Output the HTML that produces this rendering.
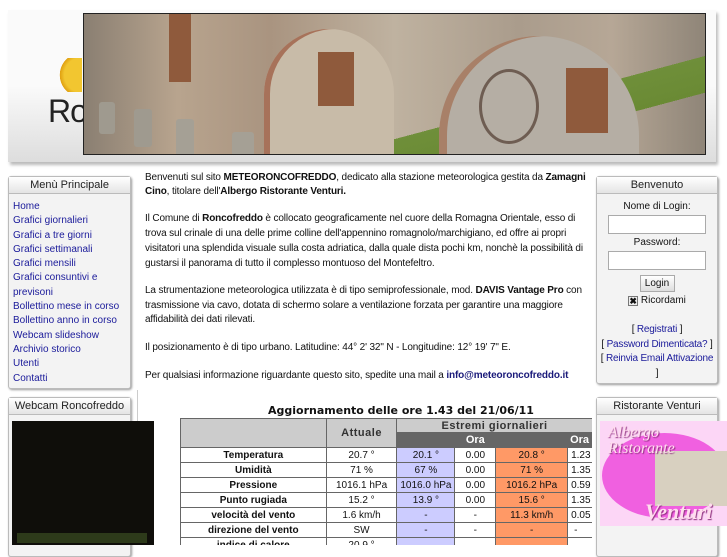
<!DOCTYPE html>
<html><head><meta charset="utf-8"><style>
*{margin:0;padding:0;box-sizing:border-box}
body{width:727px;height:545px;overflow:hidden;background:#fff;font-family:"Liberation Sans",sans-serif;font-size:10px;color:#111;position:relative}
.abs{position:absolute}
.hdr{left:8px;top:10px;width:708px;height:152px;background:linear-gradient(#fafafa 0%,#fafafa 50%,#ddd 100%);box-shadow:2px 3px 3px #bbb}
.photo{left:83px;top:13px;width:623px;height:142px;border:1px solid #222;overflow:hidden;
background:linear-gradient(165deg,rgba(0,0,0,0) 68%,#6f8f3a 68%,#6a8a34 80%,rgba(0,0,0,0) 80%),linear-gradient(90deg,#8a7f72,#b8a48e 15%,#a99480 30%,#bfb2a0 50%,#aa9c8c 70%,#b6a796 85%,#8f8578)}
.box{border:1px solid #bbb;border-radius:3px;background:#f3f3f3;box-shadow:1px 1px 2px #999}
.bh{height:17px;border-bottom:1px solid #bbb;background:linear-gradient(#fff,#e4e4e4);text-align:center;font-size:11px;line-height:16px;color:#222}
.menu a{display:block;color:#1a1a9a;text-decoration:none;font-size:10px;line-height:14.3px}
.c{white-space:nowrap;line-height:14.5px;letter-spacing:-0.14px}
table{border-collapse:collapse;font-size:10px}
td{border:1px solid #666;text-align:center;height:15px;padding:0}
.lb{font-weight:bold}
.mn{background:#ccccff}.mx{background:#ff9966}
.g{background:#ccc;font-weight:bold;font-size:11px;color:#333;letter-spacing:.5px}
.d{background:#666;color:#fff;font-weight:bold;font-size:11px}
input{display:block}
</style></head><body>
<div class="abs hdr"></div>
<div class="abs" style="left:58px;top:58px;width:24px;height:34px;background:radial-gradient(circle at 100% 50%,#f2c630 60%,#e0a010 75%,transparent 76%)"></div>
<div class="abs" style="left:48px;top:93px;font-size:32px;color:#222;letter-spacing:-1px">Ron</div>
<div class="abs photo">
 <div class="abs" style="left:85px;top:0;width:22px;height:68px;background:#8f5a3c"></div>
 <div class="abs" style="left:180px;top:15px;width:130px;height:140px;border-radius:65px 65px 0 0;background:#c8bba8;box-shadow:inset 6px 0 0 #a7725a"></div>
 <div class="abs" style="left:234px;top:38px;width:36px;height:54px;background:#8f5a3c"></div>
 <div class="abs" style="left:355px;top:22px;width:200px;height:140px;border-radius:100px 100px 0 0;background:#b5aea4;box-shadow:inset 8px 0 0 #a88068"></div>
 <div class="abs" style="left:395px;top:55px;width:60px;height:75px;border-radius:50%;border:3px solid #6e5d52"></div>
 <div class="abs" style="left:482px;top:54px;width:42px;height:65px;background:#8f5a3c"></div>
 <div class="abs" style="left:15px;top:88px;width:16px;height:32px;background:#9f9a8f;border-radius:3px"></div>
 <div class="abs" style="left:50px;top:95px;width:18px;height:38px;background:#9f9a8f;border-radius:3px"></div>
 <div class="abs" style="left:92px;top:105px;width:18px;height:45px;background:#a5a095;border-radius:3px"></div>
 <div class="abs" style="left:148px;top:118px;width:22px;height:40px;background:#a5a095;border-radius:3px"></div>
</div>

<div class="abs box" style="left:8px;top:176px;width:123px;height:213px">
 <div class="bh">Menù Principale</div>
 <div class="menu" style="padding:6px 0 0 4px">
 <a>Home</a><a>Grafici giornalieri</a><a>Grafici a tre giorni</a><a>Grafici settimanali</a><a>Grafici mensili</a><a>Grafici consuntivi e</a><a>previsoni</a><a>Bollettino mese in corso</a><a>Bollettino anno in corso</a><a>Webcam slideshow</a><a>Archivio storico</a><a>Utenti</a><a>Contatti</a>
 </div>
</div>
<div class="abs" style="left:137px;top:390px;width:1px;height:155px;background:#ccc"></div>
<div class="abs box" style="left:8px;top:397px;width:123px;height:160px"><div class="bh">Webcam Roncofreddo</div></div>
<div class="abs" style="left:12px;top:421px;width:142px;height:124px;background:#0f0e0a"></div>
<div class="abs" style="left:17px;top:533px;width:130px;height:10px;background:#2d3a1a"></div>

<div class="abs c" style="left:145px;top:171px">Benvenuti sul sito <b>METEORONCOFREDDO</b>, dedicato alla stazione meteorologica gestita da <b>Zamagni</b></div>
<div class="abs c" style="left:145px;top:185px"><b>Cino</b>, titolare dell'<b>Albergo Ristorante Venturi.</b></div>
<div class="abs c" style="left:145px;top:212px">Il Comune di <b>Roncofreddo</b> è collocato geograficamente nel cuore della Romagna Orientale, esso di</div>
<div class="abs c" style="left:145px;top:227px">trova sul crinale di una delle prime colline dell'appennino romagnolo/marchigiano, ed offre ai propri</div>
<div class="abs c" style="left:145px;top:242px">visitatori una splendida visuale sulla costa adriatica, dalla quale dista pochi km, nonchè la possibilità di</div>
<div class="abs c" style="left:145px;top:257px">gustarsi il panorama di tutto il complesso montuoso del Montefeltro.</div>
<div class="abs c" style="left:145px;top:284px">La strumentazione meteorologica utilizzata è di tipo semiprofessionale, mod. <b>DAVIS Vantage Pro</b> con</div>
<div class="abs c" style="left:145px;top:299px">trasmissione via cavo, dotata di schermo solare a ventilazione forzata per garantire una maggiore</div>
<div class="abs c" style="left:145px;top:313px">affidabilità dei dati rilevati.</div>
<div class="abs c" style="left:145px;top:341px">Il posizionamento è di tipo urbano. Latitudine: 44° 2' 32" N - Longitudine: 12° 19' 7" E.</div>
<div class="abs c" style="left:145px;top:369px">Per qualsiasi informazione riguardante questo sito, spedite una mail a <b style="color:#1a1a7a">info@meteoroncofreddo.it</b></div>

<div class="abs" style="left:268px;top:404px;font-weight:bold;font-size:11px;font-family:'DejaVu Sans',sans-serif">Aggiornamento delle ore 1.43 del 21/06/11</div>
<div class="abs" style="left:180px;top:418px;width:412px;height:127px;overflow:hidden">
<table style="width:440px">
<colgroup><col style="width:146px"><col style="width:71px"><col style="width:58px"><col style="width:41px"><col style="width:72px"><col style="width:52px"></colgroup>
<tr><td class="g" rowspan="2" style="height:29px"></td><td class="g" rowspan="2">Attuale</td><td class="g" colspan="4" style="height:14px;text-align:left;padding-left:44px">Estremi giornalieri</td></tr>
<tr><td class="d" style="height:14px"></td><td class="d">Ora</td><td class="d"></td><td class="d" style="text-align:left;padding-left:2px">Ora</td></tr>
<tr><td class="lb">Temperatura</td><td>20.7 °</td><td class="mn">20.1 °</td><td>0.00</td><td class="mx">20.8 °</td><td style="text-align:left;padding-left:3px">1.23</td></tr>
<tr><td class="lb">Umidità</td><td>71 %</td><td class="mn">67 %</td><td>0.00</td><td class="mx">71 %</td><td style="text-align:left;padding-left:3px">1.35</td></tr>
<tr><td class="lb">Pressione</td><td>1016.1 hPa</td><td class="mn">1016.0 hPa</td><td>0.00</td><td class="mx">1016.2 hPa</td><td style="text-align:left;padding-left:3px">0.59</td></tr>
<tr><td class="lb">Punto rugiada</td><td>15.2 °</td><td class="mn">13.9 °</td><td>0.00</td><td class="mx">15.6 °</td><td style="text-align:left;padding-left:3px">1.35</td></tr>
<tr><td class="lb">velocità del vento</td><td>1.6 km/h</td><td class="mn">-</td><td>-</td><td class="mx">11.3 km/h</td><td style="text-align:left;padding-left:3px">0.05</td></tr>
<tr><td class="lb">direzione del vento</td><td>SW</td><td class="mn">-</td><td>-</td><td class="mx">-</td><td style="text-align:left;padding-left:6px">-</td></tr>
<tr><td class="lb">indice di calore</td><td>20.9 °</td><td class="mn"></td><td></td><td class="mx"></td><td></td></tr>
</table></div>

<div class="abs box" style="left:596px;top:176px;width:122px;height:208px;text-align:center">
 <div class="bh">Benvenuto</div>
 <div style="margin-top:7px">Nome di Login:</div>
 <input style="margin:3px auto 0;width:98px;height:19px;border:1px solid #aaa;background:#fff">
 <div style="margin-top:3px">Password:</div>
 <input style="margin:3px auto 0;width:98px;height:19px;border:1px solid #aaa;background:#fff">
 <div style="margin:5px auto 0;width:35px;height:17px;border:1px solid #aaa;background:linear-gradient(#fff,#ddd);line-height:15px">Login</div>
 <div style="margin-top:3px"><span style="display:inline-block;width:10px;height:10px;background:#eee;border:1px solid #777;font-size:9px;line-height:8px;font-weight:bold;vertical-align:-1px">✖</span> Ricordami</div>
 <div style="margin-top:17px;line-height:14.5px;color:#1a1a9a;font-size:10px;letter-spacing:-0.2px"><span style="color:#111">[</span> Registrati <span style="color:#111">]</span><br><span style="color:#111">[</span> Password Dimenticata? <span style="color:#111">]</span><br><span style="color:#111">[</span> Reinvia Email Attivazione<br><span style="color:#111">]</span></div>
</div>
<div class="abs box" style="left:596px;top:397px;width:122px;height:160px"><div class="bh">Ristorante Venturi</div></div>
<div class="abs" style="left:600px;top:421px;width:127px;height:105px;background:#fcd6f6;overflow:hidden">
 <div class="abs" style="left:2px;top:12px;width:125px;height:85px;border-radius:50%;background:#f060e0"></div>
 <div class="abs" style="left:55px;top:30px;width:72px;height:55px;background:#d8d0c0"></div>
 <div class="abs" style="left:8px;top:4px;font-family:'Liberation Serif',serif;font-style:italic;font-size:16px;color:#fde;line-height:16px;text-shadow:1px 1px 1px #903080">Albergo<br>Ristorante</div>
 <div class="abs" style="left:45px;top:78px;font-family:'Liberation Serif',serif;font-style:italic;font-weight:bold;font-size:22px;color:#fde;text-shadow:1px 1px 1px #903080">Venturi</div>
</div>
</body></html>
